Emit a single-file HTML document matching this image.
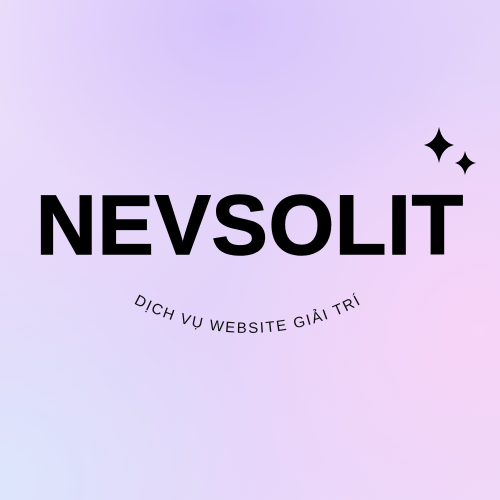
<!DOCTYPE html>
<html><head><meta charset="utf-8"><style>
html,body{margin:0;padding:0}
body{width:500px;height:500px;overflow:hidden;position:relative;
background:
radial-gradient(ellipse 260px 200px at 230px 20px,#d6c2fb 0%,rgba(214,194,251,0) 100%),
radial-gradient(ellipse 260px 260px at 480px 330px,#f7d4f8 0%,rgba(247,212,248,0) 100%),
radial-gradient(ellipse 260px 240px at 0px 480px,#dce6fb 0%,rgba(220,230,251,0) 100%),
linear-gradient(135deg,#ece0fb 0%,#e3d3fa 50%,#ecdaf9 100%);}
.t{position:absolute;left:0;top:175px;width:500px;text-align:center;font-family:"Liberation Sans",sans-serif;font-weight:bold;font-size:84px;line-height:100px;letter-spacing:1px;color:#000;-webkit-text-stroke:1.5px #000;}
svg{position:absolute;left:0;top:0}
</style></head><body>
<div class="t">NEVSOLIT</div>
<svg width="500" height="500" viewBox="0 0 500 500">
<path d="M439 127 Q442 142 454 145 Q442 148 439 163 Q436 148 424 145 Q436 142 439 127Z" fill="#000"/>
<path d="M465 151 Q467 161 476 163 Q467 165 465 175 Q463 165 455 163 Q463 161 465 151Z" fill="#000"/>
<defs><path id="arc" d="M13 98 A235 235 0 0 0 483 98"/></defs>
<text font-family="Liberation Sans, DejaVu Sans, sans-serif" font-size="15" letter-spacing="1.8" fill="#111"><textPath href="#arc" startOffset="50%" text-anchor="middle">DỊCH VỤ WEBSITE GIẢI TRÍ</textPath></text>
</svg>
</body></html>
